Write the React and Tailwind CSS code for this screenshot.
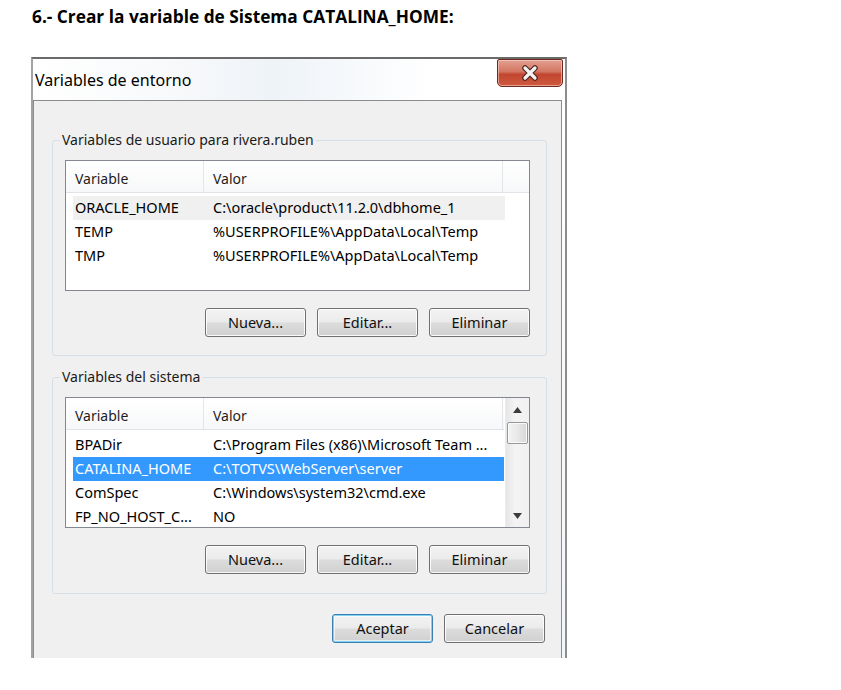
import React from 'react';

const userVars = [
  { name: 'ORACLE_HOME', value: 'C:\\oracle\\product\\11.2.0\\dbhome_1', hover: true },
  { name: 'TEMP', value: '%USERPROFILE%\\AppData\\Local\\Temp' },
  { name: 'TMP', value: '%USERPROFILE%\\AppData\\Local\\Temp' },
];

const systemVars = [
  { name: 'BPADir', value: 'C:\\Program Files (x86)\\Microsoft Team ...' },
  { name: 'CATALINA_HOME', value: 'C:\\TOTVS\\WebServer\\server', selected: true },
  { name: 'ComSpec', value: 'C:\\Windows\\system32\\cmd.exe' },
  { name: 'FP_NO_HOST_C...', value: 'NO' },
];

const WinButton = ({ children, primary }) => (
  <button
    className={`w-[101px] h-[29px] rounded-[3px] border text-[14.5px] leading-none text-[#111] flex items-center justify-center bg-[linear-gradient(#f3f3f3_0%,#ebebeb_48%,#dcdcdc_52%,#d0d0d0_100%)] ${
      primary
        ? 'border-[#3c7fb1] shadow-[inset_0_0_0_1px_#7fd0f5,inset_0_0_0_2px_rgba(255,255,255,0.6)]'
        : 'border-[#707070] shadow-[inset_0_0_0_1px_rgba(255,255,255,0.85)]'
    }`}
  >
    {children}
  </button>
);

const ListHeader = ({ extra }) => (
  <div className="h-[32px] flex border-b border-[#e0e3e8] bg-[linear-gradient(#ffffff,#f7f8f9)] text-[14px] text-[#1d1d1d]">
    <div className="w-[138px] pl-[9px] pt-[3px] flex items-center border-r border-[#e3e6ea]">Variable</div>
    <div className="w-[299px] pl-[9px] pt-[3px] flex items-center border-r border-[#e3e6ea]">Valor</div>
    {extra && <div className="flex-1" />}
  </div>
);

const Row = ({ v }) => (
  <div
    className={`ml-[7px] w-[432px] h-[24px] flex items-center text-[14.5px] whitespace-nowrap ${
      v.selected ? 'bg-[#3399ff] text-white' : v.hover ? 'bg-[#f0f0f0] text-black' : 'text-black'
    }`}
  >
    <div className="w-[138px] pl-[2px]">{v.name}</div>
    <div className="pl-[2px]">{v.value}</div>
  </div>
);

const Scrollbar = () => (
  <div className="w-[24px] h-full flex flex-col items-center bg-[linear-gradient(90deg,#e6e6e6,#f4f4f4_40%,#f0f0f0)] border-l border-[#ececec]">
    <div className="h-[24px] flex items-center justify-center">
      <svg width="9" height="6" viewBox="0 0 9 6"><polygon points="4.5,0 9,6 0,6" fill="#3d3d3d" /></svg>
    </div>
    <div className="w-[21px] h-[22px] rounded-[2px] border border-[#979797] bg-[linear-gradient(90deg,#f3f3f3,#e8e8e8_50%,#d6d6d6)] shadow-[inset_0_0_0_1px_#fafafa]" />
    <div className="flex-1" />
    <div className="h-[22px] flex items-center justify-center">
      <svg width="9" height="6" viewBox="0 0 9 6"><polygon points="0,0 9,0 4.5,6" fill="#3d3d3d" /></svg>
    </div>
  </div>
);

const GroupBox = ({ label, children, className = '' }) => (
  <fieldset className={`w-[495px] border border-[#d5dfe5] rounded-[3px] ${className}`}>
    <legend className="ml-[7px] px-[2px] text-[14px] leading-[18px] text-[#1a1a1a]">{label}</legend>
    <div className="pl-[12px]">{children}</div>
  </fieldset>
);

export default function App() {
  return (
    <div className="w-[841px] min-h-[690px] bg-white font-['Noto_Sans',sans-serif]">
      <p className="pl-[32px] pt-[7px] text-[17.3px] leading-[20px] font-bold text-black font-['Open_Sans',sans-serif]">
        6.- Crear la variable de Sistema CATALINA_HOME:
      </p>

      {/* Window */}
      <div className="mt-[30px] ml-[31px] w-[536px] h-[601px] border-t-2 border-t-[#6a6a6a] border-l-2 border-l-[#a3a3a3] border-r-2 border-r-[#8d8d8d] bg-[linear-gradient(180deg,#ffffff,#f3f6f9)] flex flex-col">
        {/* Title bar */}
        <div className="h-[41px] flex justify-between bg-[linear-gradient(90deg,#ffffff_0%,#f6f8fa_30%,#eef3f8_45%,#ffffff_75%)]">
          <span className="self-center pl-[2px] text-[16px] text-black">Variables de entorno</span>
          <div className="mr-[2px] w-[66px] h-[28px] rounded-b-[5px] rounded-t-[2px] border border-[#6e2a20] bg-[linear-gradient(#e4a093_0%,#d27560_45%,#c2452f_55%,#cf5a3f_100%)] shadow-[inset_0_0_0_1px_rgba(255,220,210,0.55)] flex items-center justify-center">
            <svg width="20" height="16" viewBox="0 0 20 16">
              <path d="M5 3 L15 13 M15 3 L5 13" stroke="#4e2520" strokeWidth="5.5" strokeLinecap="round" />
              <path d="M5 3 L15 13 M15 3 L5 13" stroke="#f4f4f4" strokeWidth="3.2" strokeLinecap="round" />
            </svg>
          </div>
        </div>

        {/* Client area */}
        <div className="mr-[3px] flex-1 border-t border-l border-r border-[#8c8c8c] bg-[#f0f0f0] pl-[18px]">
          <GroupBox label="Variables de usuario para rivera.ruben" className="mt-[30px] pb-[18px]">
            <div className="mt-[11px] w-[465px] h-[131px] border border-[#828790] bg-white">
              <ListHeader extra />
              <div className="pt-[3px]">
                {userVars.map((v) => (
                  <Row key={v.name} v={v} />
                ))}
              </div>
            </div>
            <div className="mt-[17px] w-[465px] flex justify-end gap-[11px]">
              <WinButton>Nueva...</WinButton>
              <WinButton>Editar...</WinButton>
              <WinButton>Eliminar</WinButton>
            </div>
          </GroupBox>

          <GroupBox label="Variables del sistema" className="mt-[12px] pb-[19px]">
            <div className="mt-[11px] w-[465px] h-[131px] border border-[#828790] bg-white flex">
              <div className="w-[438px] overflow-hidden">
                <ListHeader />
                <div className="pt-[3px]">
                  {systemVars.map((v) => (
                    <Row key={v.name} v={v} />
                  ))}
                </div>
              </div>
              <div className="flex-1 flex justify-end">
                <Scrollbar />
              </div>
            </div>
            <div className="mt-[17px] w-[465px] flex justify-end gap-[11px]">
              <WinButton>Nueva...</WinButton>
              <WinButton>Editar...</WinButton>
              <WinButton>Eliminar</WinButton>
            </div>
          </GroupBox>

          <div className="mt-[20px] w-[493px] flex justify-end gap-[11px]">
            <WinButton primary>Aceptar</WinButton>
            <WinButton>Cancelar</WinButton>
          </div>
        </div>
      </div>
    </div>
  );
}
